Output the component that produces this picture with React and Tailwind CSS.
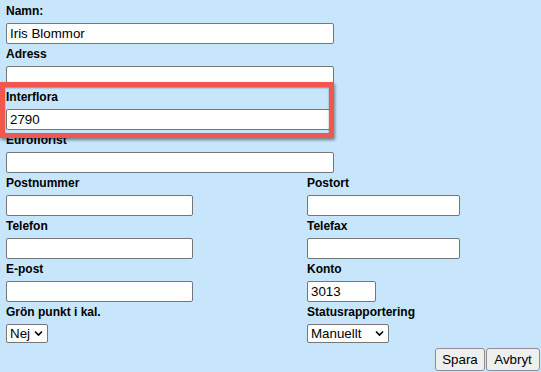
import React from "react";

const font = { fontFamily: '"Liberation Sans", Arial, sans-serif' };

const Field = ({ label, value = "", width = "w-[328px]" }) => (
  <div className="mb-[3px]">
    <div className="h-[14px] text-[12px] leading-[14px] font-bold text-black">{label}</div>
    <input
      type="text"
      defaultValue={value}
      className={`${width} mt-[5px] h-[21px] block bg-white border border-[#767676] rounded-[2px] px-[3px] text-[13.33px] text-black outline-none`}
    />
  </div>
);

const Select = ({ label, value, width }) => (
  <div>
    <div className="h-[14px] text-[12px] leading-[14px] font-bold text-black">{label}</div>
    <div className={`${width} mt-[5px] h-[19px] relative bg-white border border-[#767676] rounded-[2px] flex items-center pl-[3px]`}>
      <span className="text-[13.33px] leading-none text-black">{value}</span>
      <svg className="absolute right-[4px] top-[5px]" width="9" height="7" viewBox="0 0 9 7">
        <path d="M1 1.5 L4.5 5 L8 1.5" fill="none" stroke="#000" strokeWidth="1.6" />
      </svg>
    </div>
  </div>
);

export default function App() {
  return (
    <div className="relative w-[541px] h-[372px] overflow-hidden bg-[#c7e6fc]" style={font}>
      <div className="px-[6px] pt-[4px]">
        <Field label="Namn:" value="Iris Blommor" />
        <Field label="Adress" />
        <Field label="Interflora" value="2790" />
        <Field label="Euroflorist" />

        <div className="grid grid-cols-[301px_1fr]">
          <Field label="Postnummer" width="w-[187px]" />
          <Field label="Postort" width="w-[153px]" />
          <Field label="Telefon" width="w-[187px]" />
          <Field label="Telefax" width="w-[153px]" />
          <Field label="E-post" width="w-[187px]" />
          <Field label="Konto" value="3013" width="w-[69px]" />
          <Select label="Grön punkt i kal." value="Nej" width="w-[42px]" />
          <Select label="Statusrapportering" value="Manuellt" width="w-[82px]" />
        </div>

        <div className="flex justify-end gap-[1px] mt-[5px] -mr-[5px]">
          <button className="h-[23px] w-[50px] bg-[#efefef] border border-[#8f8f8f] rounded-[3px] text-[13.33px] text-black">
            Spara
          </button>
          <button className="h-[23px] w-[54px] bg-[#efefef] border border-[#8f8f8f] rounded-[3px] text-[13.33px] text-black">
            Avbryt
          </button>
        </div>
      </div>

      {/* highlight */}
      <div className="absolute left-0 top-[82px] w-[334px] h-[56px] border-[5px] border-[#f1574c] shadow-[1px_2px_3px_rgba(0,0,0,0.45),inset_0_1px_2px_rgba(0,0,0,0.4)] pointer-events-none" />
    </div>
  );
}
